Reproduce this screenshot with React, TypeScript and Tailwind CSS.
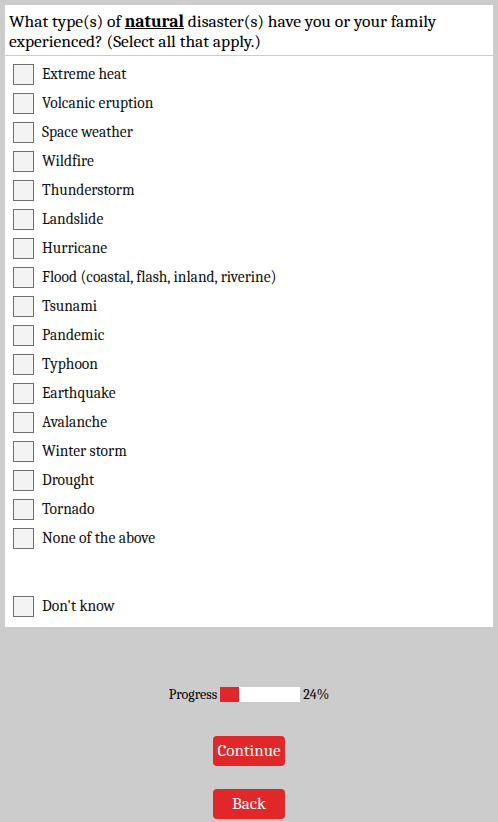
import React, { useState } from 'react';

const options = [
  'Extreme heat',
  'Volcanic eruption',
  'Space weather',
  'Wildfire',
  'Thunderstorm',
  'Landslide',
  'Hurricane',
  'Flood (coastal, flash, inland, riverine)',
  'Tsunami',
  'Pandemic',
  'Typhoon',
  'Earthquake',
  'Avalanche',
  'Winter storm',
  'Drought',
  'Tornado',
  'None of the above',
];

const Option: React.FC<{ label: string; checked: boolean; onToggle: () => void }> = ({ label, checked, onToggle }) => (
  <label className="flex items-center h-[29px] pl-2 cursor-pointer">
    <span
      onClick={onToggle}
      className="w-[21px] h-[21px] border border-[#707070] bg-[#f3f3f3] flex items-center justify-center text-[14px]"
    >
      {checked ? '✓' : ''}
    </span>
    <span className="ml-2 text-[15.5px] text-[#111]">{label}</span>
  </label>
);

export default function App() {
  const [checked, setChecked] = useState<Record<string, boolean>>({});
  const toggle = (k: string) => setChecked({ ...checked, [k]: !checked[k] });

  return (
    <div
      className="min-h-[822px] bg-[#cccccc] pt-[5px] px-[5px]"
      style={{ fontFamily: 'Cambria, "Liberation Serif", serif' }}
    >
      <div className="bg-white">
        <div className="px-[4px] pt-[6px] pb-[4px] text-[17.5px] leading-[20px] text-black border-b border-[#cccccc]">
          What type(s) of <b className="underline">natural</b> disaster(s) have you or your family experienced? (Select all that apply.)
        </div>
        <div className="pt-[4px] pb-[6px]">
          {options.map((o) => (
            <Option key={o} label={o} checked={!!checked[o]} onToggle={() => toggle(o)} />
          ))}
          <div className="h-[39px]" />
          <Option label="Don't know" checked={!!checked['dk']} onToggle={() => toggle('dk')} />
        </div>
      </div>

      <div className="flex items-center justify-center mt-[57px] text-[14px] text-black">
        <span>Progress</span>
        <div className="ml-[3px] w-[80px] h-[15px] bg-white">
          <div className="h-full bg-[#e0282a]" style={{ width: '24%' }} />
        </div>
        <span className="ml-[3px]">24%</span>
      </div>

      <div className="flex flex-col items-center mt-[31px] gap-[23px]">
        <button className="w-[72px] h-[30px] rounded-[4px] bg-[#e0282a] text-white text-[17px]">Continue</button>
        <button className="w-[72px] h-[30px] rounded-[4px] bg-[#e0282a] text-white text-[17px]">Back</button>
      </div>
    </div>
  );
}
